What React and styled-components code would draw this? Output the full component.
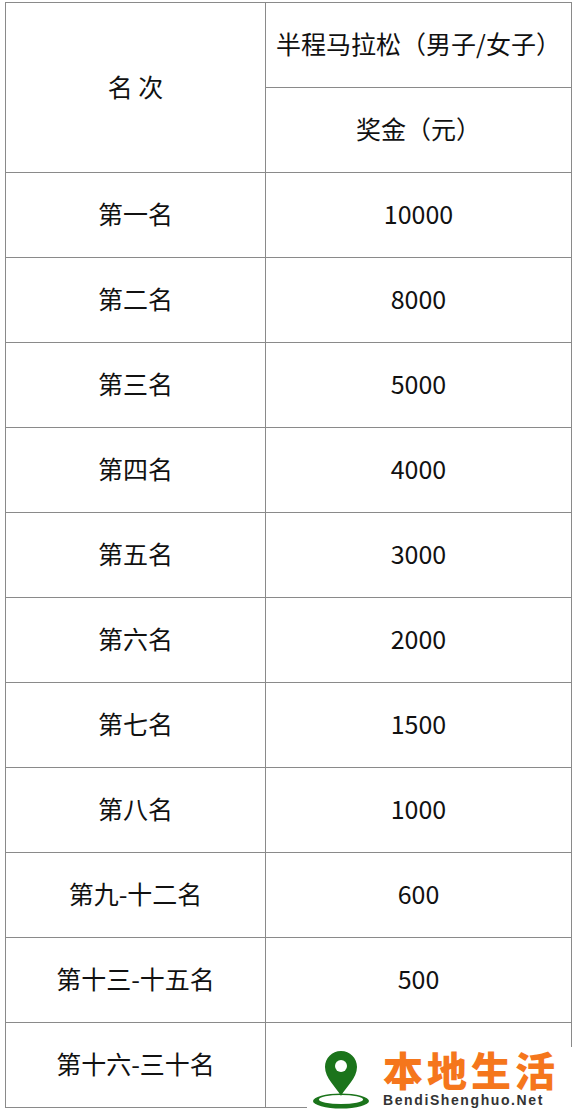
import React from "react";
import styled, { createGlobalStyle } from "styled-components";

const Global = createGlobalStyle`
  html, body { margin: 0; padding: 0; background: #fff; }
  body { font-family: "Microsoft YaHei", "Noto Sans CJK SC", "Noto Sans", sans-serif; }
`;

const Page = styled.div`
  position: relative;
  width: 577px;
  height: 1118px;
  padding: 2px 0 0 5px;
  box-sizing: border-box;
  overflow: hidden;
`;

const Table = styled.table`
  border-collapse: collapse;
  width: 567px;
  table-layout: fixed;
  color: #111;
  font-size: 25px;
`;

const Row = styled.tr`
  height: 85px;
`;

const Cell = styled.td`
  border: 1px solid #8a8a8a;
  text-align: center;
  vertical-align: middle;
  padding: 0 0 3px 0;
  line-height: 1;
  width: ${(p) => p.$w || "auto"};
`;

const Watermark = styled.div`
  position: absolute;
  left: 307px;
  top: 1047px;
  right: 0;
  bottom: 0;
  background: #fff;
  display: flex;
  align-items: flex-start;
  padding: 2px 0 0 5px;
  gap: 11px;
`;

const Brand = styled.div`
  display: flex;
  flex-direction: column;
  align-items: flex-start;
`;

const BrandCN = styled.div`
  font-family: "Noto Sans CJK SC", sans-serif;
  font-weight: 900;
  font-size: 40px;
  line-height: 41px;
  color: #f5761c;
  letter-spacing: 4px;
`;

const BrandEN = styled.div`
  font-family: "Liberation Sans", Arial, sans-serif;
  font-weight: 700;
  font-size: 14px;
  line-height: 14px;
  color: #333;
  letter-spacing: 1.6px;
  margin-top: 3px;
`;

const rows = [
  ["第一名", "10000"],
  ["第二名", "8000"],
  ["第三名", "5000"],
  ["第四名", "4000"],
  ["第五名", "3000"],
  ["第六名", "2000"],
  ["第七名", "1500"],
  ["第八名", "1000"],
  ["第九-十二名", "600"],
  ["第十三-十五名", "500"],
  ["第十六-三十名", ""],
];

function Pin() {
  return (
    <svg width="60" height="62" viewBox="0 0 60 62">
      <ellipse cx="29" cy="52" rx="28" ry="7.5" fill="#1b741b" />
      <ellipse cx="29" cy="50.5" rx="22" ry="4.5" fill="#fff" />
      <path
        d="M29 2 C20 2 13 9 13 18 C13 29 24 38 29 47 C34 38 45 29 45 18 C45 9 38 2 29 2 Z"
        fill="#1b741b"
      />
      <circle cx="29" cy="17" r="6" fill="#fff" />
    </svg>
  );
}

export default function App() {
  return (
    <>
      <Global />
      <Page>
        <Table>
          <tbody>
            <Row>
              <Cell rowSpan={2} $w="259px">名 次</Cell>
              <Cell>半程马拉松（男子/女子）</Cell>
            </Row>
            <Row>
              <Cell>奖金（元）</Cell>
            </Row>
            {rows.map(([a, b]) => (
              <Row key={a}>
                <Cell>{a}</Cell>
                <Cell>{b}</Cell>
              </Row>
            ))}
          </tbody>
        </Table>
        <Watermark>
          <Pin />
          <Brand>
            <BrandCN>本地生活</BrandCN>
            <BrandEN>BendiShenghuo.Net</BrandEN>
          </Brand>
        </Watermark>
      </Page>
    </>
  );
}
